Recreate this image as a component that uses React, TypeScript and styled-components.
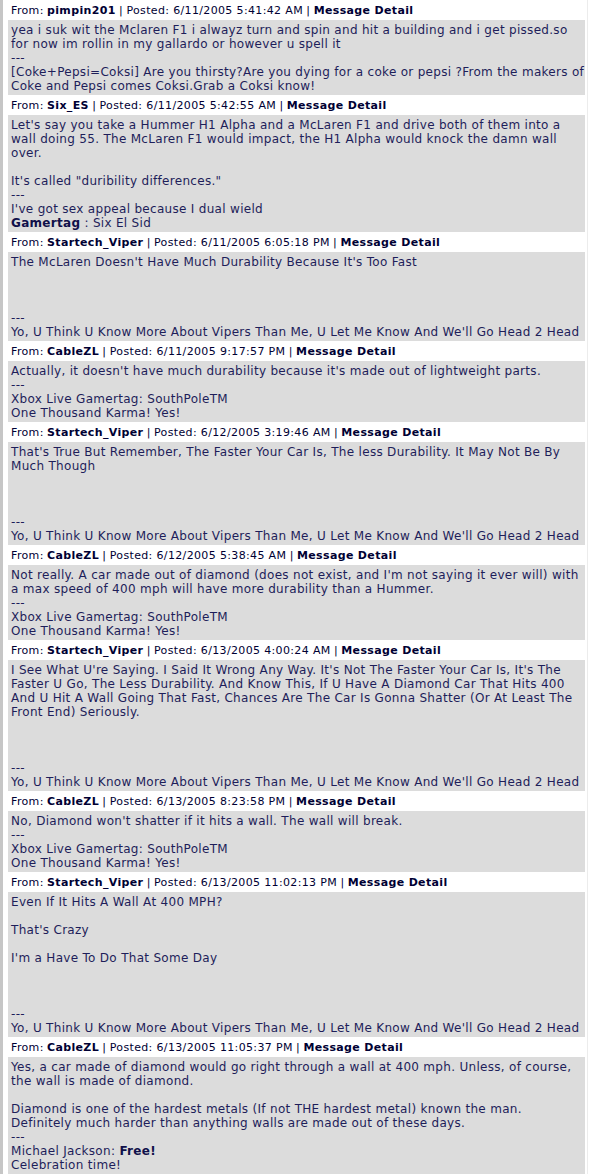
import React from "react";
import styled, { createGlobalStyle } from "styled-components";

const GlobalStyle = createGlobalStyle`
  html, body {
    margin: 0;
    padding: 0;
    background: #ffffff;
  }
  body {
    font-family: Verdana, "DejaVu Sans", sans-serif;
  }
`;

const Board = styled.div`
  width: 577px;
  border-left: 3px solid #c6c6c6;
  border-right: 1px solid #ececec;
  padding: 0 2px 0 5px;
  background: #ffffff;
`;

const Post = styled.div`
  display: flex;
  flex-direction: column;
`;

const PostHeader = styled.div`
  height: 20px;
  display: flex;
  align-items: center;
  padding: 0 3px;
  font-size: 11px;
  letter-spacing: 0.35px;
  color: #000033;
  white-space: nowrap;
`;

const Author = styled.b`
  font-weight: bold;
  margin-left: 0.3em;
`;

const Sep = styled.span`
  margin: 0 0.3em;
`;

const DetailLink = styled.a`
  font-weight: bold;
  color: #000033;
  text-decoration: none;
  cursor: pointer;
`;

const PostBody = styled.div`
  background: #dcdcdc;
  padding: 3px 3px 2px 3px;
  font-size: 12px;
  letter-spacing: 0.3px;
  line-height: 14px;
  color: #1e1e5a;
  white-space: nowrap;
`;

const Strong = styled.b`
  font-weight: bold;
  color: #10104a;
`;

type Line = React.ReactNode;

interface PostData {
  author: string;
  posted: string;
  lines: Line[];
}

const viperSig = "Yo, U Think U Know More About Vipers Than Me, U Let Me Know And We'll Go Head 2 Head";
const cableSig: Line[] = ["Xbox Live Gamertag: SouthPoleTM", "One Thousand Karma! Yes!"];

const posts: PostData[] = [
  {
    author: "pimpin201",
    posted: "6/11/2005 5:41:42 AM",
    lines: [
      "yea i suk wit the Mclaren F1 i alwayz turn and spin and hit a building and i get pissed.so",
      "for now im rollin in my gallardo or however u spell it",
      "---",
      "[Coke+Pepsi=Coksi] Are you thirsty?Are you dying for a coke or pepsi ?From the makers of",
      "Coke and Pepsi comes Coksi.Grab a Coksi know!",
    ],
  },
  {
    author: "Six_ES",
    posted: "6/11/2005 5:42:55 AM",
    lines: [
      "Let's say you take a Hummer H1 Alpha and a McLaren F1 and drive both of them into a",
      "wall doing 55. The McLaren F1 would impact, the H1 Alpha would knock the damn wall",
      "over.",
      "",
      "It's called \"duribility differences.\"",
      "---",
      "I've got sex appeal because I dual wield",
      <>
        <Strong>Gamertag</Strong> : Six El Sid
      </>,
    ],
  },
  {
    author: "Startech_Viper",
    posted: "6/11/2005 6:05:18 PM",
    lines: ["The McLaren Doesn't Have Much Durability Because It's Too Fast", "", "", "", "---", viperSig],
  },
  {
    author: "CableZL",
    posted: "6/11/2005 9:17:57 PM",
    lines: ["Actually, it doesn't have much durability because it's made out of lightweight parts.", "---", ...cableSig],
  },
  {
    author: "Startech_Viper",
    posted: "6/12/2005 3:19:46 AM",
    lines: [
      "That's True But Remember, The Faster Your Car Is, The less Durability. It May Not Be By",
      "Much Though",
      "",
      "",
      "",
      "---",
      viperSig,
    ],
  },
  {
    author: "CableZL",
    posted: "6/12/2005 5:38:45 AM",
    lines: [
      "Not really. A car made out of diamond (does not exist, and I'm not saying it ever will) with",
      "a max speed of 400 mph will have more durability than a Hummer.",
      "---",
      ...cableSig,
    ],
  },
  {
    author: "Startech_Viper",
    posted: "6/13/2005 4:00:24 AM",
    lines: [
      "I See What U're Saying. I Said It Wrong Any Way. It's Not The Faster Your Car Is, It's The",
      "Faster U Go, The Less Durability. And Know This, If U Have A Diamond Car That Hits 400",
      "And U Hit A Wall Going That Fast, Chances Are The Car Is Gonna Shatter (Or At Least The",
      "Front End) Seriously.",
      "",
      "",
      "",
      "---",
      viperSig,
    ],
  },
  {
    author: "CableZL",
    posted: "6/13/2005 8:23:58 PM",
    lines: ["No, Diamond won't shatter if it hits a wall. The wall will break.", "---", ...cableSig],
  },
  {
    author: "Startech_Viper",
    posted: "6/13/2005 11:02:13 PM",
    lines: [
      "Even If It Hits A Wall At 400 MPH?",
      "",
      "That's Crazy",
      "",
      "I'm a Have To Do That Some Day",
      "",
      "",
      "",
      "---",
      viperSig,
    ],
  },
  {
    author: "CableZL",
    posted: "6/13/2005 11:05:37 PM",
    lines: [
      "Yes, a car made of diamond would go right through a wall at 400 mph. Unless, of course,",
      "the wall is made of diamond.",
      "",
      "Diamond is one of the hardest metals (If not THE hardest metal) known the man.",
      "Definitely much harder than anything walls are made out of these days.",
      "---",
      <>
        Michael Jackson: <Strong>Free!</Strong>
      </>,
      "Celebration time!",
    ],
  },
];

const Message: React.FC<{ post: PostData }> = ({ post }) => (
  <Post>
    <PostHeader>
      From:<Author>{post.author}</Author>
      <Sep>|</Sep>Posted: {post.posted}
      <Sep>|</Sep>
      <DetailLink>Message Detail</DetailLink>
    </PostHeader>
    <PostBody>
      {post.lines.map((line, i) => (
        <React.Fragment key={i}>
          {line}
          {i < post.lines.length - 1 && <br />}
        </React.Fragment>
      ))}
    </PostBody>
  </Post>
);

export default function App() {
  return (
    <>
      <GlobalStyle />
      <Board>
        {posts.map((p, i) => (
          <Message key={i} post={p} />
        ))}
      </Board>
    </>
  );
}
